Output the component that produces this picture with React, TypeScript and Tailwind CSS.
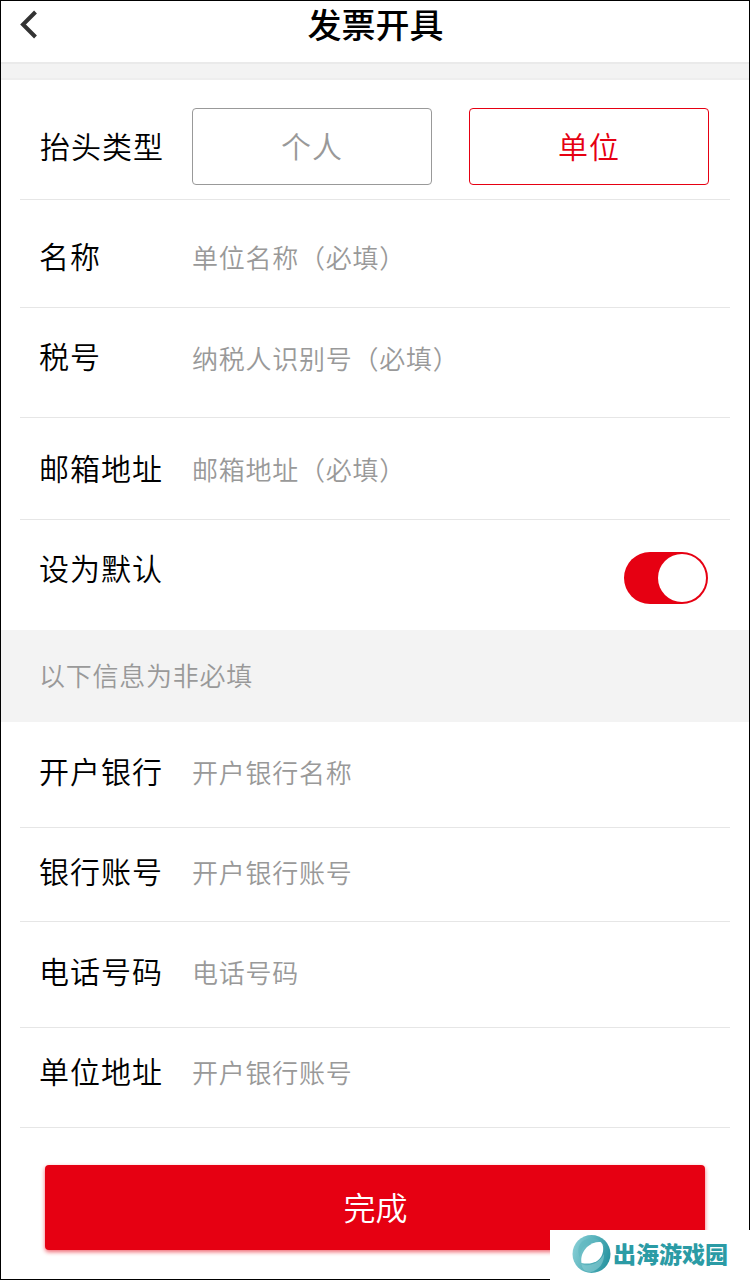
import { useState } from 'react';
import { clsx } from 'clsx';

interface Field {
  label: string;
  placeholder: string;
  row: string;
  input: string;
}

const requiredFields: Field[] = [
  { label: '名称', placeholder: '单位名称（必填）', row: 'h-[108px] pt-[35px]', input: 'mt-px' },
  { label: '税号', placeholder: '纳税人识别号（必填）', row: 'h-[110px] pt-[27px]', input: 'mt-0.5' },
  { label: '邮箱地址', placeholder: '邮箱地址（必填）', row: 'h-[102px] pt-[29px]', input: 'mt-px' },
];

const optionalFields: Field[] = [
  { label: '开户银行', placeholder: '开户银行名称', row: 'h-[106px] pt-[28px]', input: 'mt-px' },
  { label: '银行账号', placeholder: '开户银行账号', row: 'h-[94px] pt-[22px]', input: 'mt-px' },
  { label: '电话号码', placeholder: '电话号码', row: 'h-[106px] pt-[28px]', input: 'mt-px' },
  { label: '单位地址', placeholder: '开户银行账号', row: 'h-[100px] pt-[22px]', input: 'mt-px' },
];

const labelClass = 'shrink-0 text-[30px] leading-10 tracking-[1px] text-black font-[350]';

function FieldRow({ label, placeholder, row, input }: Field) {
  return (
    <label className={clsx('mx-[19px] flex items-start border-b border-[#e6e6e6] pl-[19px]', row)}>
      <span className={clsx(labelClass, 'w-[153px]')}>{label}</span>
      <input
        placeholder={placeholder}
        className={clsx(
          'h-10 min-w-0 flex-1 text-[26px] font-[350] tracking-[0.75px] text-black outline-none placeholder:text-[#999]',
          input
        )}
      />
    </label>
  );
}

function SiteBadge() {
  return (
    <div className="absolute -right-px -bottom-px flex h-[50px] w-[200px] items-center bg-white pl-[22px]">
      <svg viewBox="0 0 40 40" className="h-10 w-10 shrink-0">
        <defs>
          <linearGradient id="ring" x1="0" y1="0.3" x2="1" y2="0.6">
            <stop offset="0" stopColor="#86ced5" />
            <stop offset="1" stopColor="#2794a0" />
          </linearGradient>
        </defs>
        <circle cx="19.5" cy="19" r="19" fill="url(#ring)" />
        <path d="M9.500 29C15 32 26 30 32 19C32.500 28 27 35 19 37C13 37 10 34 9.500 29Z" fill="#8bcdd3" opacity="0.6" />
        <path d="M11 6C17 2 29 2 33 13C30 7 21 5 14 10C10 13 8 18 8 23C5 16 6 10 11 6Z" fill="#5fb7c0" opacity="0.6" />
        <path d="M28.500 7C31.500 9 32 15 30 20C27 27 19 30 9.500 28C8.500 23 10 17 15 12C19 8.500 24 6.500 28.500 7Z" fill="#fff" />
      </svg>
      <span className="-mt-1 ml-px text-[23px] leading-10 font-black whitespace-nowrap text-[#2b9ba5]">出海游戏园</span>
    </div>
  );
}

export default function App() {
  const [type, setType] = useState('单位');
  const [isDefault, setIsDefault] = useState(true);

  return (
    <div className="relative h-[1280px] w-[750px] border border-black bg-white font-['Noto_Sans_CJK_SC',sans-serif]">
      {/* Header */}
      <header className="grid h-[61px] grid-cols-[60px_1fr_60px] items-start">
        <button aria-label="返回" className="mt-2 ml-[18px]">
          <svg viewBox="0 0 20 32" className="h-8 w-5" fill="none" stroke="#333" strokeWidth="4">
            <path d="M16.500 3L4 15.500L16.500 28" />
          </svg>
        </button>
        <h1 className="pl-px text-center text-[34px] leading-[46px] font-medium text-black">发票开具</h1>
      </header>
      <div className="h-[18px] border-t-2 border-b-2 border-t-[#eaeaea] border-b-[#eee] bg-[#f3f3f3]" />

      {/* Invoice title type */}
      <div className="mx-[19px] flex h-[120px] items-start border-b border-[#e6e6e6] pt-7 pl-5">
        <span className={clsx(labelClass, 'mt-[17px] w-[152px]')}>抬头类型</span>
        <div className="flex gap-[37px]">
          {['个人', '单位'].map((t) => (
            <button
              key={t}
              onClick={() => setType(t)}
              className={clsx(
                'h-[77px] w-[240px] rounded-[4px] border pb-0.5 text-[30px] font-[350] tracking-[1px]',
                type === t ? 'border-[#e60012] text-[#e60012]' : 'border-[#999] text-[#999]'
              )}
            >
              {t}
            </button>
          ))}
        </div>
      </div>

      {requiredFields.map((f) => (
        <FieldRow key={f.label} {...f} />
      ))}

      {/* Default toggle */}
      <div className="flex h-[110px] items-start justify-between pr-[41px] pl-[38px]">
        <span className={clsx(labelClass, 'mt-[27px]')}>设为默认</span>
        <button
          role="switch"
          aria-checked={isDefault}
          aria-label="设为默认"
          onClick={() => setIsDefault(!isDefault)}
          className={clsx(
            'mt-8 flex h-[52px] w-[84px] rounded-full p-0.5',
            isDefault ? 'justify-end bg-[#e60012]' : 'justify-start bg-[#ccc]'
          )}
        >
          <span className="h-12 w-12 rounded-full bg-white" />
        </button>
      </div>

      <p className="h-[92px] bg-[#f3f3f3] pl-[38px] text-[26px] leading-[90px] font-[350] tracking-[0.75px] text-[#999]">
        以下信息为非必填
      </p>

      {optionalFields.map((f) => (
        <FieldRow key={f.label} {...f} />
      ))}

      <button className="mt-[37px] ml-11 h-[85px] w-[660px] rounded-[4px] bg-[#e60012] pb-1 pl-px text-[32px] font-[350] text-white shadow-[0_2px_4px_rgba(230,0,18,0.6)]">
        完成
      </button>

      <SiteBadge />
    </div>
  );
}
